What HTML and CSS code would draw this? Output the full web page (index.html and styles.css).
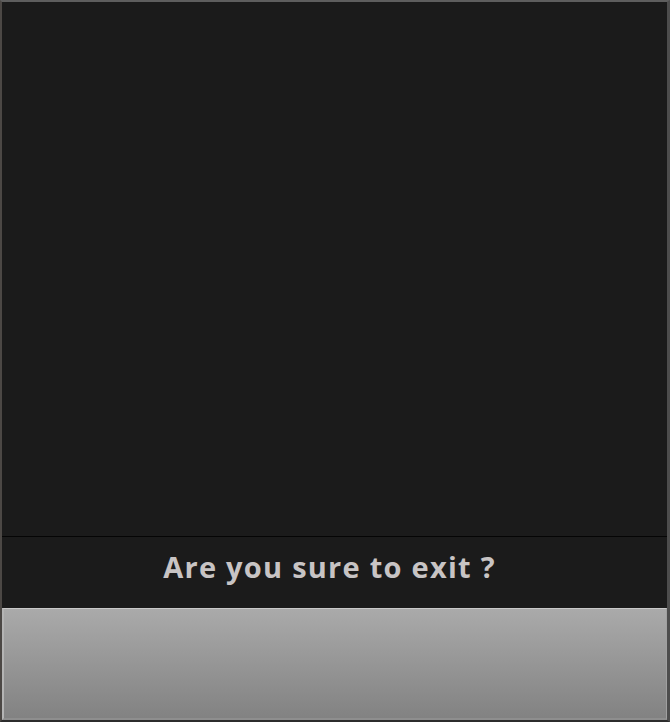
FILE: index.html
```html
<!DOCTYPE html>
<html>
<head>
<meta charset="utf-8">
<link rel="stylesheet" href="styles.css">
</head>
<body>
<div class="frame">
  <div class="view"></div>
  <div class="message">Are you sure to exit ?</div>
  <div class="button"></div>
</div>
</body>
</html>
```
FILE: styles.css
```css
html, body {
  margin: 0;
  padding: 0;
  background: #1b1b1b;
}
.frame {
  box-sizing: border-box;
  width: 670px;
  height: 722px;
  display: flex;
  flex-direction: column;
  background: #1b1b1b;
  border-top: 2px solid #5e5e5e;
  border-left: 2px solid #4c4845;
  border-right: 3px solid #4d4d4d;
  border-bottom: 2px solid #2c2c2c;
}
.view {
  height: 534px;
  border-bottom: 1px solid #050505;
  background: #1b1b1b;
}
.message {
  height: 71px;
  display: flex;
  align-items: center;
  justify-content: center;
  font-family: "Open Sans", "DejaVu Sans", sans-serif;
  font-weight: 700;
  font-size: 29px;
  letter-spacing: 1.25px;
  color: #c8c4c4;
  padding-bottom: 12px;
  padding-right: 10px;
  box-sizing: border-box;
}
.button {
  flex: 1;
  box-sizing: border-box;
  border-top: 1px solid #c9c9c9;
  border-left: 2px solid #b4b4b4;
  border-right: 1px solid #a0a0a0;
  border-bottom: 2px solid #8e8e8e;
  background: linear-gradient(to bottom, #aaaaaa, #828282);
}
```
